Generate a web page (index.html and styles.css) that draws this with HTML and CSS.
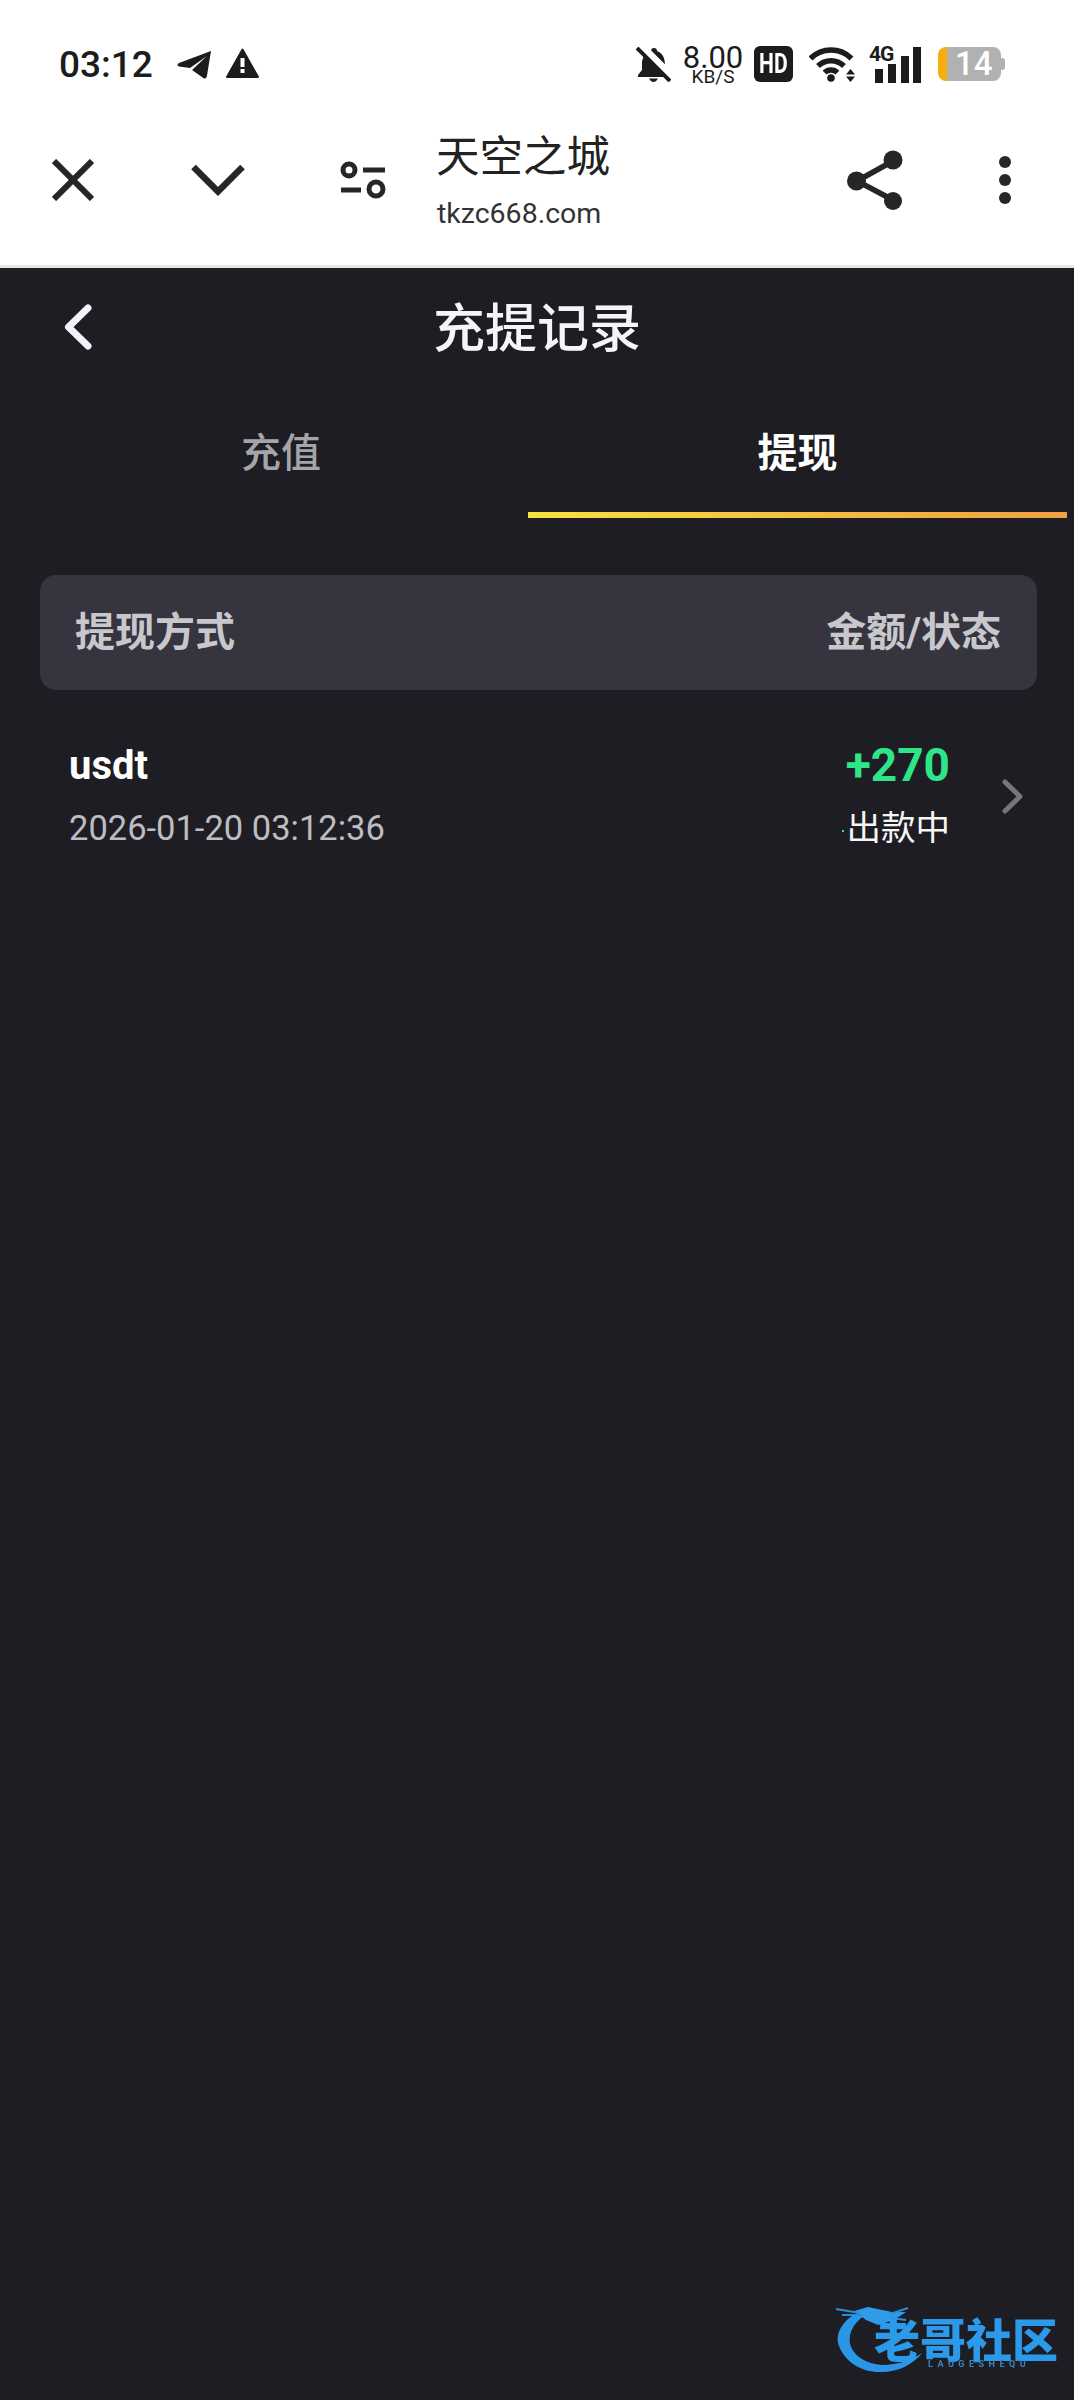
FILE: index.html
```html
<!DOCTYPE html>
<html lang="zh">
<head>
  <meta charset="UTF-8">
  <title>充提记录 - 天空之城</title>
  <link rel="stylesheet" href="styles.css">
</head>
<body>
  <div class="browser-top">
    <div class="status-bar">
      <div class="status-left">
        <span class="clock">03:12</span>
        <svg class="ico-plane" width="34" height="29" viewBox="0 0 34 29"><path fill="#1c1c1c" d="M34 1 2 13Q-1 15 2 16.500L13 18 30 6 15 20 27 28.500Q29.500 29 30 25.500Z"/></svg>
        <svg class="ico-warn" width="33" height="30" viewBox="0 0 33 30"><path fill="#1c1c1c" stroke="#1c1c1c" stroke-width="2" stroke-linejoin="round" d="M16.500 1.500 32 29H1Z"/><rect x="14.500" y="10" width="4" height="9" fill="#fff"/><rect x="14.500" y="21" width="4" height="4" fill="#fff"/></svg>
      </div>
      <div class="status-right">
        <svg class="ico-bell" width="35" height="35" viewBox="0 0 35 35"><path fill="#1c1c1c" d="M18 1a3 3 0 0 1 3 3C27 6 29 12 29 18V23L33 28V30H2V28L6 23V16C6 10 10 6 15 4a3 3 0 0 1 3-3ZM13 31.500H22Q20 35 17.500 35 15 35 13 31.500Z"/><path stroke="#fff" stroke-width="8" d="M5 -1 37 31"/><path stroke="#1c1c1c" stroke-width="4" d="M1 1 34 34"/></svg>
        <div class="speed"><span class="speed-num">8.00</span><span class="speed-unit">KB/S</span></div>
        <div class="hd-badge"><span>HD</span></div>
        <svg class="ico-wifi" width="46" height="36" viewBox="0 0 46 36"><g fill="none" stroke="#1c1c1c" stroke-width="5.500"><path d="M1.500 12.500a29 29 0 0 1 41 0"/><path d="M9 20a18.500 18.500 0 0 1 26 0"/><path d="M15.600 26.600a9 9 0 0 1 12.800 0"/></g><circle cx="22" cy="32" r="3.800" fill="#1c1c1c"/><path fill="#1c1c1c" d="M41.500 23 46 28.500H37ZM37 30.500H46L41.500 36Z"/></svg>
        <div class="signal">
          <span class="net-label">4G</span>
          <svg width="52" height="37" viewBox="0 0 52 37"><g fill="#1c1c1c"><rect x="6" y="23" width="8" height="14"/><rect x="19" y="18" width="8" height="19"/><rect x="32" y="10" width="8" height="27"/><rect x="44" y="1" width="8" height="36"/></g></svg>
        </div>
        <div class="battery">
          <div class="battery-level"></div>
          <span class="battery-num">14</span>
          <div class="battery-nub"></div>
        </div>
      </div>
    </div>

    <div class="toolbar">
      <div class="tool-btn">
        <svg width="42" height="42" viewBox="0 0 42 42"><path fill="none" stroke="#262626" stroke-width="6" d="M2 2 40 40M40 2 2 40"/></svg>
      </div>
      <div class="tool-btn">
        <svg width="54" height="32" viewBox="0 0 54 32"><path fill="none" stroke="#262626" stroke-width="6.500" d="M2.500 3 27 27.500 51.500 3"/></svg>
      </div>
      <div class="tool-btn">
        <svg width="46" height="38" viewBox="0 0 46 38"><g fill="none" stroke="#262626" stroke-width="5"><circle cx="9" cy="9" r="6"/><circle cx="36" cy="28" r="7"/></g><path stroke="#262626" stroke-width="5" d="M23 9H45M1 29H21"/></svg>
      </div>
      <div class="page-info">
        <div class="page-title">天空之城</div>
        <div class="page-url">tkzc668.com</div>
      </div>
      <div class="tool-btn narrow">
        <svg width="56" height="60" viewBox="0 0 56 60"><path fill="none" stroke="#262626" stroke-width="5.500" d="M46 11 10 31 46 50"/><circle cx="46" cy="10" r="9.500" fill="#262626"/><circle cx="9.500" cy="31" r="9.500" fill="#262626"/><circle cx="46" cy="51" r="9" fill="#262626"/></svg>
      </div>
      <div class="tool-btn narrow">
        <svg width="12" height="48" viewBox="0 0 12 48"><g fill="#262626"><circle cx="6" cy="6" r="6"/><circle cx="6" cy="24" r="6"/><circle cx="6" cy="42" r="6"/></g></svg>
      </div>
    </div>
  </div>

  <div class="app">
    <div class="nav">
      <svg class="back" width="28" height="46" viewBox="0 0 28 46"><path fill="none" stroke="#f2f0f8" stroke-width="7" stroke-linecap="round" stroke-linejoin="round" d="M24 4 4.500 23 24 42"/></svg>
      <h1>充提记录</h1>
    </div>

    <div class="tabs">
      <div class="tab">充值</div>
      <div class="tab active">提现</div>
    </div>

    <div class="list-head">
      <span>提现方式</span>
      <span>金额/状态</span>
    </div>

    <div class="record">
      <div class="record-info">
        <div class="record-name">usdt</div>
        <div class="record-date">2026-01-20 03:12:36</div>
      </div>
      <div class="record-money">
        <div class="record-amount">+270</div>
        <div class="record-state">出款中</div>
      </div>
      <svg class="record-arrow" width="21" height="35" viewBox="0 0 21 35"><path fill="none" stroke="#77767c" stroke-width="5" stroke-linecap="round" stroke-linejoin="round" d="M3 3 18 17.500 3 32"/></svg>
    </div>
  </div>

  <div class="watermark">
    <svg width="100" height="76" viewBox="0 0 100 76">
      <path fill="#2a96e6" d="M27 13C10 22 5 36 9 46 15 62 32 73 52 72 68 72 84 64 92 53 82 60 68 65 52 65 36 64 25 56 21 47 17 36 22 24 34 16Z"/>
      <path fill="#2f9ce8" d="M24 11 38 7 62 12 76 12 64 20 48 25 36 20Z"/>
      <path fill="none" stroke="#2a8ed8" stroke-width="2" d="M6 9 30 13M12 15 32 15M60 14 78 8M60 18 76 20"/>
    </svg>
    <div class="wm-name">老哥社区</div>
    <div class="wm-sub">LAUGESHEQU</div>
  </div>
</body>
</html>
```

FILE: styles.css
```css
* {
  box-sizing: border-box;
}

body {
  margin: 0;
  height: 2400px;
  position: relative;
  overflow: hidden;
  background: #1e1d23;
  font-family: Roboto, "Noto Sans CJK SC", sans-serif;
}

/* phone status bar + in-app browser bar */
.browser-top {
  height: 268px;
  background: white;
  border-bottom: 3px solid #e6e6e6;
}

.status-bar {
  height: 95px;
  padding: 33px 69px 0 59px;
  display: flex;
  align-items: center;
  justify-content: space-between;
}

.status-left {
  display: flex;
  align-items: center;
}

.clock {
  width: 118px;
  font-size: 37px;
  font-weight: 500;
  color: #1c1c1c;
}

.ico-plane {
  margin-right: 15px;
}

.ico-warn {
  margin-top: -2px;
}

.status-right {
  display: flex;
  align-items: center;
}

.ico-bell {
  margin-right: 12px;
}

.speed {
  width: 60px;
  margin-right: 11px;
  display: flex;
  flex-direction: column;
  align-items: center;
  color: #1c1c1c;
}

.speed-num {
  font-size: 31px;
  line-height: 24px;
}

.speed-unit {
  font-size: 19px;
  line-height: 13px;
}

.hd-badge {
  width: 39px;
  height: 36px;
  margin-right: 16px;
  background: #1c1c1c;
  border-radius: 6px;
  color: white;
  display: flex;
  align-items: center;
  justify-content: center;
  font-size: 27px;
  font-weight: 700;
}

.hd-badge span {
  transform: scaleX(0.78);
}

.ico-wifi {
  margin-right: 14px;
}

.signal {
  width: 52px;
  height: 37px;
  margin-right: 17px;
  position: relative;
}

.net-label {
  position: absolute;
  left: 0;
  top: -3px;
  font-size: 21px;
  line-height: 22px;
  font-weight: 700;
  letter-spacing: -1px;
  color: #1c1c1c;
}

.battery {
  width: 67px;
  height: 34px;
  padding-right: 4px;
  position: relative;
  display: flex;
}

.battery-level {
  width: 9px;
  background: #f5ae0e;
  border-radius: 8px 0 0 8px;
}

.battery-num {
  flex: 1;
  background: #b1b1b1;
  border-radius: 0 8px 8px 0;
  color: white;
  font-size: 33px;
  font-weight: 500;
  line-height: 34px;
  padding-left: 8px;
}

.battery-nub {
  position: absolute;
  right: 0;
  top: 11px;
  width: 4px;
  height: 12px;
  background: #b1b1b1;
  border-radius: 0 3px 3px 0;
}

.toolbar {
  height: 170px;
  padding-right: 4px;
  display: flex;
  align-items: center;
}

.tool-btn {
  width: 145px;
  display: flex;
  align-items: center;
  justify-content: center;
}

.tool-btn.narrow {
  width: 130px;
}

.page-info {
  flex: 1;
  padding: 9px 0 0 1px;
}

.page-title {
  font-size: 43.500px;
  line-height: 58px;
  color: #222;
}

.page-url {
  font-size: 28.500px;
  line-height: 54px;
  padding-left: 1px;
  color: #333;
}

/* app content */
.nav {
  height: 118px;
  padding: 0 64px;
  display: grid;
  grid-template-columns: 1fr auto 1fr;
  align-items: center;
}

.nav h1 {
  margin: -6px 0 0;
  font-size: 52px;
  font-weight: 500;
  color: #f5f5f7;
}

.tabs {
  height: 132px;
  padding: 0 7px 0 34px;
  display: flex;
}

.tab {
  width: 494px;
  padding-bottom: 4px;
  display: flex;
  align-items: center;
  justify-content: center;
  font-size: 40px;
  font-weight: 500;
  color: #a5a5a9;
}

.tab.active {
  width: 539px;
  color: white;
  font-weight: 700;
  position: relative;
}

.tab.active::after {
  content: "";
  position: absolute;
  left: 0;
  right: 0;
  bottom: 0;
  height: 6px;
  background: linear-gradient(90deg, #f7e143, #f0a042);
}

.list-head {
  height: 115px;
  margin: 57px 37px 0 40px;
  padding: 0 36px 8px 35px;
  background: #35343f;
  border-radius: 16px;
  display: flex;
  align-items: center;
  justify-content: space-between;
  font-size: 40px;
  font-weight: 700;
  color: #c8c8cc;
}

.record {
  padding: 44px 51px 0 69px;
  display: flex;
  align-items: center;
}

.record-info {
  flex: 1;
}

.record-name {
  font-size: 40px;
  line-height: 62px;
  font-weight: 700;
  color: white;
}

.record-date {
  font-size: 34.500px;
  line-height: 62px;
  color: #bdbdc1;
}

.record-money {
  text-align: right;
}

.record-amount {
  font-size: 46px;
  line-height: 62px;
  font-weight: 700;
  color: #2ee58a;
}

.record-state {
  font-size: 34.500px;
  line-height: 62px;
  padding-top: 1px;
  color: #f5f5f5;
}

/* tiny green speck left of the status text */
.record-state::before {
  content: "";
  display: inline-block;
  width: 2px;
  height: 2px;
  margin-right: 3px;
  vertical-align: middle;
  background: #2ee58a;
}

.record-arrow {
  margin-left: 52px;
}

/* forum logo stamped on the screenshot */
.watermark {
  position: absolute;
  left: 830px;
  top: 2300px;
  width: 236px;
  height: 80px;
  filter: blur(0.5px);
}

.wm-name {
  position: absolute;
  left: 44px;
  top: 13px;
  font-size: 46px;
  line-height: 56px;
  font-weight: 900;
  color: #2b9aea;
  white-space: nowrap;
}

.wm-sub {
  position: absolute;
  left: 98px;
  top: 59px;
  font-size: 9px;
  line-height: 11px;
  font-weight: 700;
  letter-spacing: 4.500px;
  color: #3a84c0;
  white-space: nowrap;
}
```
